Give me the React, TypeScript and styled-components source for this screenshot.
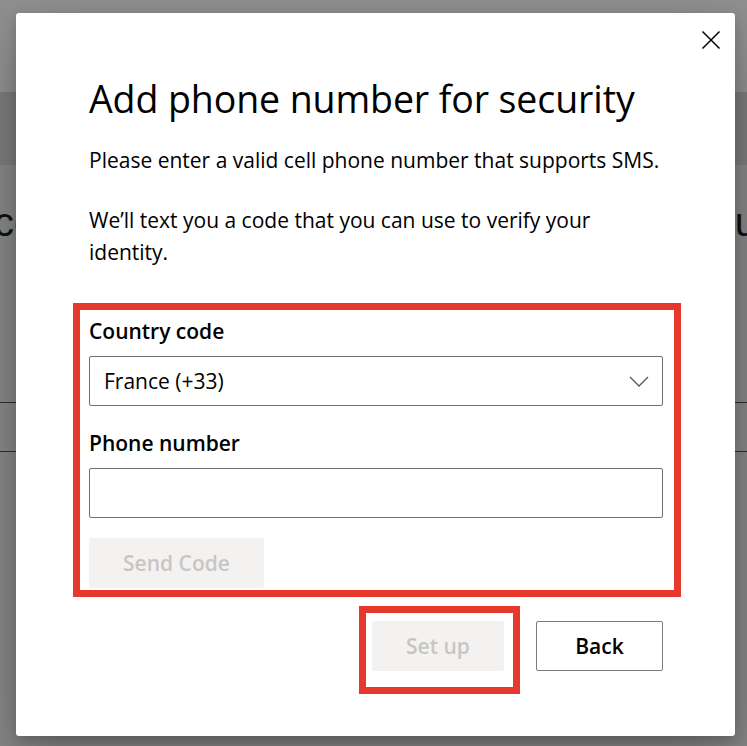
import React from "react";
import styled, { createGlobalStyle } from "styled-components";

const GlobalStyle = createGlobalStyle`
  html, body { margin: 0; padding: 0; }
  body { font-family: "Open Sans", "Noto Sans", sans-serif; background: #868686; }
  * { box-sizing: border-box; }
`;

const Page = styled.div`
  position: relative;
  width: 747px;
  height: 746px;
  overflow: hidden;
  background: #868686;
  display: flex;
  flex-direction: column;
`;

const TopBar = styled.div`
  height: 92px;
  background: #8f8f8f;
`;

const Band = styled.div`
  height: 73px;
  background: #7b7b7b;
`;

const BgHeading = styled.div`
  display: flex;
  justify-content: space-between;
  margin-top: 32px;
  height: 50px;
  font-family: "Liberation Sans", Arial, sans-serif;
  font-size: 40px;
  line-height: 50px;
  color: #111;
`;

const BgLeft = styled.span`
  margin-left: -6px;
`;

const BgRight = styled.span`
  margin-right: -30px;
`;

const Divider = styled.div<{ $top: number }>`
  margin-top: ${(p) => p.$top}px;
  height: 1px;
  background: #2e2e2e;
`;

const Dialog = styled.div`
  position: absolute;
  left: 16px;
  top: 13px;
  width: 719px;
  height: 723px;
  background: #fff;
  border-radius: 3px;
  box-shadow: 0 25px 58px rgba(0, 0, 0, 0.22), 0 5px 14px rgba(0, 0, 0, 0.18);
  padding: 62px 72px 0 73px;
  display: flex;
  flex-direction: column;
  color: #000;
`;

const CloseButton = styled.button`
  position: absolute;
  top: 17px;
  right: 14px;
  width: 20px;
  height: 20px;
  padding: 0;
  border: 0;
  background: transparent;
  display: flex;
  align-items: center;
  justify-content: center;
`;

const Title = styled.h1`
  margin: 0;
  font-size: 37.5px;
  line-height: 48px;
  font-weight: 400;
  letter-spacing: -0.1px;
  white-space: nowrap;
`;

const Paragraph = styled.p<{ $gap: number; $nowrap?: boolean }>`
  margin: ${(p) => p.$gap}px 0 0;
  font-size: 21px;
  line-height: 32px;
  white-space: ${(p) => (p.$nowrap ? "nowrap" : "normal")};
`;

const Highlight = styled.div<{ $pt: number; $pb: number; $pl: number; $pr: number }>`
  border: 7px solid #e6392b;
  padding: ${(p) => `${p.$pt}px ${p.$pr}px ${p.$pb}px ${p.$pl}px`};
`;

const FormBox = styled(Highlight)`
  margin: 35px -18px 0 -16px;
  display: flex;
  flex-direction: column;
  align-items: flex-start;
`;

const Label = styled.label<{ $gap: number }>`
  margin-top: ${(p) => p.$gap}px;
  font-size: 21px;
  line-height: 28px;
  font-weight: 600;
`;

const Field = styled.div`
  position: relative;
  margin-top: 11px;
  width: 574px;
  height: 50px;
  border: 1px solid #6f6f6f;
  border-radius: 2px;
  display: flex;
  align-items: center;
  padding: 0 14px;
  font-size: 21px;
  color: #000;
`;

const SelectValue = styled.span`
  flex: 1;
`;

const Chevron = styled.svg`
  width: 20px;
  height: 11px;
  margin-right: -1px;
`;

const Button = styled.button<{ $w: number; $variant: "disabled" | "outline" }>`
  width: ${(p) => p.$w}px;
  height: 50px;
  border-radius: 2px;
  font-family: inherit;
  font-size: 21px;
  font-weight: 600;
  padding: 0;
  display: flex;
  align-items: center;
  justify-content: center;
  border: ${(p) => (p.$variant === "outline" ? "1px solid #7d7b79" : "0")};
  background: ${(p) => (p.$variant === "outline" ? "#fff" : "#f3f2f1")};
  color: ${(p) => (p.$variant === "outline" ? "#000" : "#c8c6c4")};
`;

const SendButton = styled(Button)`
  margin-top: 20px;
`;

const Footer = styled.div`
  margin-top: 9px;
  display: flex;
  justify-content: flex-end;
  align-items: flex-start;
  gap: 16px;
`;

const ButtonBox = styled(Highlight)``;

const BackButton = styled(Button)`
  margin-top: 15px;
`;

export default function App() {
  return (
    <>
      <GlobalStyle />
      <Page>
        <TopBar />
        <Band />
        <BgHeading>
          <BgLeft>co</BgLeft>
          <BgRight>us</BgRight>
        </BgHeading>
        <Divider $top={155} />
        <Divider $top={48} />
        <Dialog role="dialog" aria-label="Add phone number for security">
          <CloseButton aria-label="Close">
            <svg width="20" height="20" viewBox="0 0 20 20">
              <path d="M1.5 1.5 L18.5 18.5 M18.5 1.5 L1.5 18.5" stroke="#000" strokeWidth="1.5" fill="none" />
            </svg>
          </CloseButton>
          <Title>Add phone number for security</Title>
          <Paragraph $gap={21} $nowrap>Please enter a valid cell phone number that supports SMS.</Paragraph>
          <Paragraph $gap={28}>We’ll text you a code that you can use to verify your identity.</Paragraph>
          <FormBox $pt={7} $pb={2} $pl={9} $pr={11}>
            <Label $gap={0}>Country code</Label>
            <Field>
              <SelectValue>France (+33)</SelectValue>
              <Chevron viewBox="0 0 20 11">
                <path d="M1 1 L10 10 L19 1" stroke="#555" strokeWidth="1.3" fill="none" />
              </Chevron>
            </Field>
            <Label $gap={23}>Phone number</Label>
            <Field />
            <SendButton $w={175} $variant="disabled">Send Code</SendButton>
          </FormBox>
          <Footer>
            <ButtonBox $pt={8} $pb={16} $pl={6} $pr={9}>
              <Button $w={132} $variant="disabled">Set up</Button>
            </ButtonBox>
            <BackButton $w={127} $variant="outline">Back</BackButton>
          </Footer>
        </Dialog>
      </Page>
    </>
  );
}
